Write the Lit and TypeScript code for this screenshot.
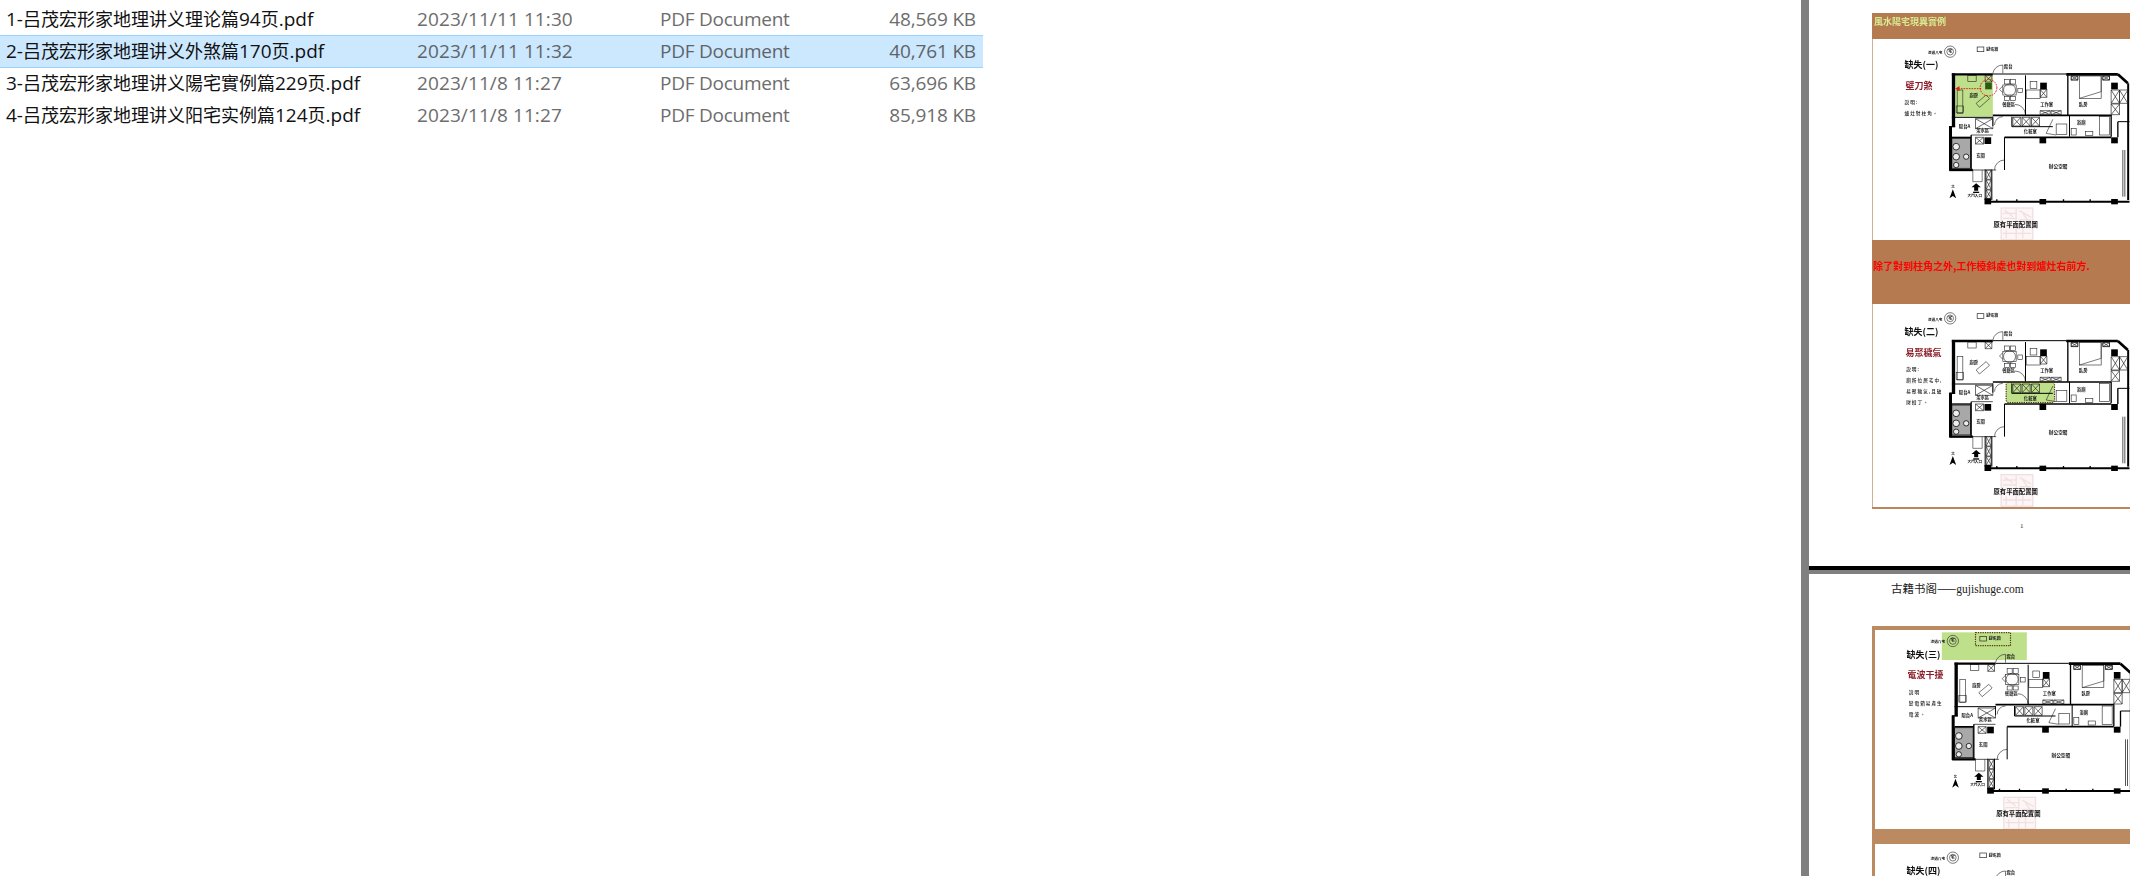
import { LitElement, html, css, svg } from "lit";
import { customElement } from "lit/decorators.js";

const FILES = [
  { name: "1-吕茂宏形家地理讲义理论篇94页.pdf", date: "2023/11/11 11:30", type: "PDF Document", size: "48,569 KB", sel: false },
  { name: "2-吕茂宏形家地理讲义外煞篇170页.pdf", date: "2023/11/11 11:32", type: "PDF Document", size: "40,761 KB", sel: true },
  { name: "3-吕茂宏形家地理讲义陽宅實例篇229页.pdf", date: "2023/11/8 11:27", type: "PDF Document", size: "63,696 KB", sel: false },
  { name: "4-吕茂宏形家地理讲义阳宅实例篇124页.pdf", date: "2023/11/8 11:27", type: "PDF Document", size: "85,918 KB", sel: false },
];

type L = [number, number, number, number, number];
const WALLS: L[] = [
  [487, 223, 610, 223, 7], [610, 222, 830, 222, 3], [830, 223, 985, 223, 8], [985, 223, 1015, 250, 8], [1016, 250, 1016, 600, 6],
  [492, 220, 492, 380, 10], [483, 378, 483, 512, 9], [480, 380, 497, 380, 4], [480, 510, 550, 510, 7],
  [708, 226, 708, 345, 3], [835, 222, 835, 345, 4], [610, 346, 965, 346, 5], [487, 352, 610, 352, 3],
  [610, 350, 610, 378, 3], [645, 412, 965, 412, 5], [645, 412, 645, 510, 3], [545, 405, 545, 510, 4],
  [545, 510, 620, 510, 2], [590, 605, 1020, 605, 6], [587, 508, 587, 600, 3], [607, 508, 607, 600, 3],
  [840, 345, 840, 410, 3], [965, 345, 965, 410, 4], [985, 365, 985, 412, 4], [985, 365, 1020, 365, 3],
  [667, 350, 667, 380, 3], [667, 380, 790, 380, 3], [550, 510, 550, 545, 1.5], [550, 545, 578, 545, 1.5], [578, 510, 578, 545, 1.5],
  [1000, 450, 1000, 590, 2], [1006, 450, 1006, 590, 2], [487, 412, 545, 412, 4], [545, 405, 610, 405, 2],
];
const THIN: number[][] = [
  [503, 270, 17, 70], [535, 226, 25, 18], [500, 318, 22, 20], [645, 238, 15, 14], [663, 238, 15, 14], [640, 255, 40, 30], [645, 290, 15, 12], [663, 290, 15, 12], [685, 265, 14, 13],
  [722, 245, 20, 20], [710, 270, 42, 25], [870, 228, 65, 67], [845, 228, 20, 12], [940, 228, 20, 12], [930, 350, 30, 55], [845, 385, 15, 20], [888, 395, 22, 12], [800, 372, 32, 32],
];
const BLACK: number[][] = [[750, 597, 20, 16], [965, 597, 20, 16], [585, 595, 20, 18], [750, 412, 20, 18], [965, 412, 20, 18], [585, 412, 20, 20], [752, 248, 20, 20], [965, 248, 20, 20]];
const XBOX: number[][] = [[752, 268, 20, 24], [558, 356, 52, 30], [558, 412, 24, 20], [670, 352, 24, 26], [698, 352, 24, 26], [726, 352, 24, 26], [752, 332, 30, 12], [785, 332, 30, 12], [965, 270, 25, 40], [990, 270, 25, 40], [965, 312, 25, 32], [590, 510, 15, 28], [590, 540, 15, 28], [590, 570, 15, 25], [587, 226, 20, 20], [940, 228, 20, 12], [845, 228, 20, 12]];
const LABELS: [number, number, string, number][] = [
  [540, 292, "廚房", 13], [638, 317, "餐廳區", 13], [752, 317, "工作室", 13], [868, 317, "臥房", 13], [862, 373, "浴廁", 13],
  [703, 399, "化粧室", 13], [508, 383, "陽台A", 13], [560, 396, "茶水區", 13], [560, 470, "玄關", 13], [778, 503, "辦公空間", 14], [534, 590, "大門入口", 11],
];

interface Side { title: string; red: string; lines: string[]; tx: number; lx: number; }

function top(side: Side) {
  return svg`
    <text class="room" x="643" y="205" font-size="13">露台</text>
    <path class="thin" d="M610 220A30 30 0 0 1 640 195V220"></path>
    <text class="room" x="590" y="152" font-size="12">變電箱</text>
    <text class="room" x="415" y="162" font-size="11">流通八宅</text>
    <circle class="thin" cx="482" cy="155" r="17"></circle>
    <circle class="thin" cx="482" cy="155" r="10"></circle>
    <text class="room" x="476" y="159" font-size="12">宅</text>
    <rect class="x" x="563" y="141" width="20" height="14"></rect>
    <text class="head" x=${side.tx} y="205" font-size="27">${side.title}</text>`;
}

function plan(side: Side, overlay: unknown, extra: unknown = "") {
  return svg`
    ${overlay}
    <g class="stamp">
      <rect class="stampbg" x="635" y="624" width="95" height="95"></rect>
      <path d="M640 640H680M640 655H680M640 680H680M640 700H725M690 632L725 652M690 660H725M680 624V719M650 690V715M700 680V715M645 630L670 650M700 640L720 670"></path>
    </g>
    <g class="thin">
      ${THIN.map((r) => svg`<rect x=${r[0]} y=${r[1]} width=${r[2]} height=${r[3]}></rect>`)}
      <path d="M615 375A25 25 0 0 1 640 350M615 510A30 30 0 0 1 645 480M708 345A32 32 0 0 0 676 313M960 240V228M870 295L935 275V228M560 310L590 285L600 296L570 322Z M630 268L640 258M630 268L640 278M790 358L770 400L800 405"></path>
      <circle cx="660" cy="270" r="18"></circle>
    </g>
    <g class="wash">
      <rect x="487" y="415" width="56" height="90"></rect>
      <circle class="bowl" cx="500" cy="440" r="10"></circle><circle class="bowl" cx="500" cy="470" r="10"></circle><circle class="bowl" cx="500" cy="495" r="8"></circle><circle class="bowl" cx="530" cy="470" r="8"></circle>
    </g>
    ${WALLS.map((w) => svg`<line class="wall" x1=${w[0]} y1=${w[1]} x2=${w[2]} y2=${w[3]} stroke-width=${w[4]}></line>`)}
    ${XBOX.map((b) => svg`<path class="x" d="M${b[0]} ${b[1]}h${b[2]}v${b[3]}h${-b[2]}zL${b[0] + b[2]} ${b[1] + b[3]}M${b[0] + b[2]} ${b[1]}L${b[0]} ${b[1] + b[3]}"></path>`)}
    ${BLACK.map((r) => svg`<rect class="black" x=${r[0]} y=${r[1]} width=${r[2]} height=${r[3]}></rect>`)}
    <path class="black" d="M620 605v-7h4v7zM680 605v-7h4v7zM820 605v-7h4v7zM900 605v-7h4v7zM490 568L480 595L490 588L500 595Z M560 550L574 562H566V572H554V562H546Z"></path>
    <rect class="black" x="551" y="575" width="18" height="4"></rect>
    ${extra}
    ${LABELS.map((t) => svg`<text class="room" x=${t[0]} y=${t[1]} font-size=${t[3]}>${t[2]}</text>`)}
    <text class="room" x="485" y="565" font-size="10">北</text>
    ${top(side)}
    <text class="redhead" x=${side.tx + 3} y="267" font-size="27">${side.red}</text>
    ${side.lines.map((s, i) => svg`<text class="note" x=${side.lx} y=${313 + i * 33} font-size="14">${s}</text>`)}
    <text class="caption" x="612" y="681" font-size="19">原有平面配置圖</text>`;
}

const GREEN1 = svg`<rect class="green" x="497" y="226" width="113" height="124"></rect>`;
const EXTRA1 = svg`
  <rect x="587" y="248" width="20" height="20" fill="#2f5a10"></rect>
  <circle class="dash" cx="597" cy="263" r="25"></circle>
  <line class="dash" x1="575" y1="266" x2="505" y2="266"></line>
  <path d="M510 258L497 266L510 274Z" fill="#e02020"></path>`;
const GREEN2 = svg`<rect class="green" x="650" y="346" width="145" height="62" rx="8"></rect>`;
const EXTRA2 = svg`<rect class="dots" x="650" y="346" width="145" height="62" rx="8"></rect>`;
const GREEN3 = svg`<rect class="green" x="449" y="129" width="255" height="83"></rect>`;
const EXTRA3 = svg`<rect class="dots" x="550" y="130" width="105" height="39"></rect>`;

const S1: Side = { title: "缺失(一)", red: "壁刀煞", lines: ["說明:", "爐灶對柱角。"], tx: 345, lx: 345 };
const S2: Side = { title: "缺失(二)", red: "易聚穢氣", lines: ["說明:", "廁所位居宅中,", "易聚穢氣,且破", "財損丁。"], tx: 345, lx: 350 };
const S3: Side = { title: "缺失(三)", red: "電波干擾", lines: ["說明", "變電箱易產生", "電波。"], tx: 343, lx: 350 };
const S4: Side = { title: "缺失(四)", red: "", lines: [], tx: 343, lx: 350 };

function runs(name: string) {
  return name.split(/([\u3400-\u9fff]+)/).filter(Boolean).map((p) =>
    /[\u3400-\u9fff]/.test(p) ? html`<span class="cjk">${p}</span>` : html`<span>${p}</span>`
  );
}

@customElement("app-root")
export class AppRoot extends LitElement {
  static styles = css`
    :host { display: block; width: 2130px; height: 876px; overflow: hidden; background: #fff; }
    .app { display: flex; height: 876px; overflow: hidden; }
    .list { width: 1801px; flex: none; padding-top: 3px; box-sizing: border-box; }
    .row {
      width: 983px; height: 32px; box-sizing: border-box; padding: 0 7px 2px 6px; display: grid;
      grid-template-columns: 411px 243px 1fr auto; align-items: center;
      font: 19px/28px "Open Sans", "Noto Sans CJK SC", sans-serif; color: #6d6d6d;
      border: solid transparent; border-width: 1px 0; white-space: nowrap;
    }
    .row.sel { background: #cce8ff; border-color: #99d1ff; height: 33px; margin-bottom: -1px; color: #5f6468; }
    .name { color: #111; }
    .cjk { font: 18px/28px "Noto Sans CJK SC", sans-serif; }
    .date { letter-spacing: 0.1px; }
    .type { letter-spacing: -0.25px; }
    .size { letter-spacing: -0.15px; }
    .viewer { flex: 1; border-left: 8px solid #808080; min-width: 0; height: 876px; overflow: hidden; background: #fff; }
    .page { background: #fff; overflow: hidden; }
    .p1 { height: 566px; padding-top: 13px; box-sizing: border-box; }
    .sep { height: 4px; background: #000; }
    .gap { height: 4px; background: #808080; }
    .frame { margin-left: 63px; }
    .band {
      background: #b57a50; box-sizing: border-box; font-family: "Noto Sans CJK TC", sans-serif; font-weight: 700; white-space: nowrap; overflow: hidden; filter: blur(0.3px);
    }
    .b1 { height: 26px; color: #d6eb92; font-size: 9px; line-height: 14px; padding: 2px 0 0 2px; }
    .b2 { height: 64px; color: #ff0000; font-size: 10px; line-height: 52px; padding-left: 1px; }
    .b3 { height: 2px; background: #b8875f; }
    .b4 { height: 15px; background: #bc8a60; }
    .panel { display: block; filter: blur(0.35px); }
    .tan { border-left: 1.5px solid #cdb097; }
    .tan2 { border-left: 3.5px solid #bc8a60; }
    .pnum { font: 7px/10px "Liberation Serif", serif; color: #222; padding: 12px 0 0 148px; }
    .p2 { height: 302px; overflow: hidden; }
    .site { font: 11.5px/16px "Liberation Serif", "Noto Sans CJK SC", serif; color: #222; padding: 6px 0 0 82px; height: 52px; box-sizing: border-box; white-space: nowrap; }
    .em { font-family: "Noto Sans CJK SC", sans-serif; }
    .f2 { border-top: 4px solid #bc8a60; }
    .green { fill: #bfe08a; }
    .wall { stroke: #000; }
    .thin { fill: none; stroke: #222; stroke-width: 1.8; }
    .x { fill: none; stroke: #222; stroke-width: 2; }
    .black { fill: #000; }
    .wash { fill: #a8a8a8; stroke: #111; stroke-width: 2.5; }
    .bowl { fill: #eee; }
    .stamp { fill: none; stroke: #f2dfe0; stroke-width: 4; }
    .stampbg { fill: #fcf6f6; }
    .dash { fill: none; stroke: #d92020; stroke-width: 3; stroke-dasharray: 5 3; }
    .dots { fill: none; stroke: #5a3a10; stroke-width: 3.5; stroke-dasharray: 4 3; }
    text { font-family: "Noto Sans CJK TC", sans-serif; }
    .room { fill: #222; font-weight: 700; }
    .head { fill: #111; font-weight: 700; }
    .redhead { fill: #8a1f2a; font-weight: 700; }
    .note { fill: #222; font-weight: 500; letter-spacing: 3px; }
    .caption { fill: #111; font-weight: 700; }
  `;

  private panel(h: number, vy: number, dx: number, bw: number, cls: string, body: unknown) {
    const w = 258 - bw;
    return html`<svg class="panel ${cls}" width=${w} height=${h} viewBox="${246 + bw * 3 - dx} ${vy} ${w * 3} ${h * 3}">${body}</svg>`;
  }

  render() {
    return html`<div class="app">
      <div class="list">
        ${FILES.map((f) => html`<div class="row ${f.sel ? "sel" : ""}">
          <span class="name">${runs(f.name)}</span><span class="date">${f.date}</span><span class="type">${f.type}</span><span class="size">${f.size}</span>
        </div>`)}
      </div>
      <div class="viewer">
        <div class="page p1">
          <div class="frame">
            <div class="band b1">風水陽宅現異實例</div>
            ${this.panel(201, 117, 0, 1.5, "tan", plan(S1, GREEN1, EXTRA1))}
            <div class="band b2">除了對到柱角之外,工作檯斜處也對到爐灶右前方.</div>
            ${this.panel(203, 112, 0, 1.5, "tan", plan(S2, GREEN2, EXTRA2))}
            <div class="band b3"></div>
            <div class="pnum">1</div>
          </div>
        </div>
        <div class="sep"></div>
        <div class="gap"></div>
        <div class="page p2">
          <div class="site">古籍书阁<span class="em">——</span>gujishuge.com</div>
          <div class="frame f2">
            ${this.panel(199, 122, 8, 3.5, "tan2", plan(S3, GREEN3, EXTRA3))}
            <div class="band b4"></div>
            ${this.panel(32, 114, 8, 3.5, "tan2", top(S4))}
          </div>
        </div>
      </div>
    </div>`;
  }
}
